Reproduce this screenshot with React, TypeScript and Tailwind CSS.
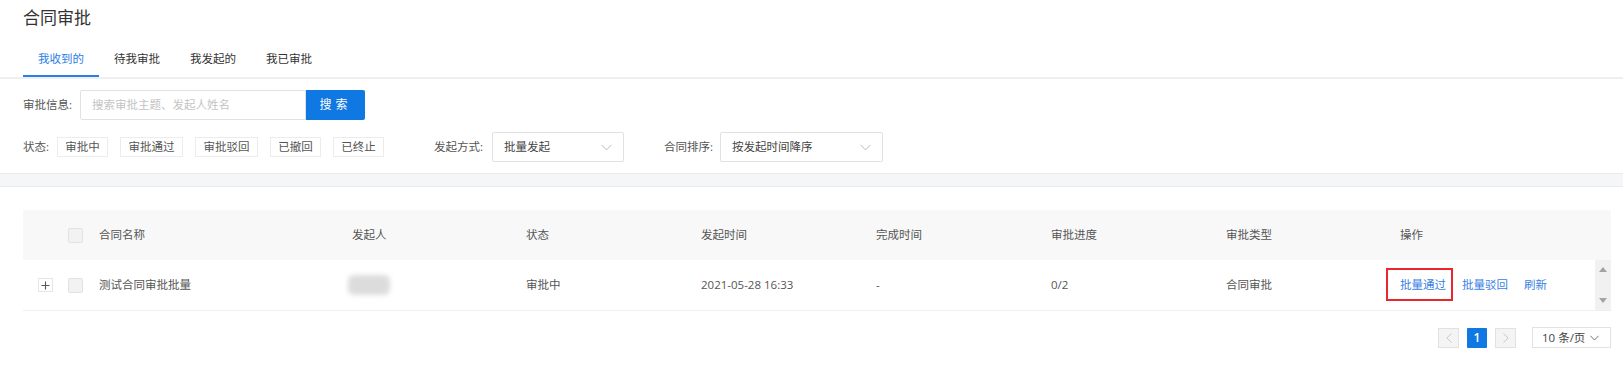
import React from "react";

const tabs = ["我收到的", "待我审批", "我发起的", "我已审批"];
const statusTags = ["审批中", "审批通过", "审批驳回", "已撤回", "已终止"];

const cols = "grid grid-cols-[76px_253px_174px_175px_175px_175px_175px_174px_195px_16px]";

const Chevron = ({ className = "", w = 11, h = 7 }: { className?: string; w?: number; h?: number }) => (
  <svg width={w} height={h} viewBox="0 0 11 7" className={className} fill="none">
    <polyline points="0.5,0.8 5.5,6 10.5,0.8" stroke="currentColor" strokeWidth="1" />
  </svg>
);

const Checkbox = () => (
  <span className="block h-[15px] w-[15px] rounded-[2px] border border-[#e2e2e2] bg-[#f2f2f2]" />
);

const Select = ({ value, width }: { value: string; width: string }) => (
  <div
    className={`flex h-[30px] ${width} items-center justify-between rounded-[2px] border border-[#e1e1e1] bg-white pl-[11px] pr-[11px] text-[#444]`}
  >
    <span>{value}</span>
    <Chevron className="text-[#bdbdbd]" />
  </div>
);

export default function App() {
  return (
    <div className="h-[384px] w-[1623px] overflow-hidden bg-white font-['Open_Sans','Noto_Sans_CJK_SC',sans-serif] text-[11.5px] text-[#555]">
      {/* title */}
      <div className="pl-[23px] pt-[8px] text-[17px] leading-5 text-[#333]">合同审批</div>

      {/* tabs */}
      <div className="flex border-b-2 border-[#efefef] pl-[23px]">
        {tabs.map((t, i) => (
          <div
            key={t}
            className={`h-[49px] px-[15px] pt-[24px] leading-[14px] ${
              i === 0 ? "border-b-2 border-[#2a80e6] text-[#2a80e6]" : "text-[#333]"
            }`}
          >
            {t}
          </div>
        ))}
      </div>

      {/* search */}
      <div className="mt-[11px] flex h-[30px] items-center pl-[23px]">
        <span className="w-[57px]">审批信息:</span>
        <div className="flex h-[30px] w-[226px] items-center rounded-l-[2px] border border-[#e1e1e1] pl-[11px] text-[#c4c4c4]">
          搜索审批主题、发起人姓名
        </div>
        <button
          type="button"
          className="h-[30px] w-[59px] rounded-r-[2px] bg-[#0f78e2] text-[12px] tracking-[4px] text-white"
        >
          搜索
        </button>
      </div>

      {/* filters */}
      <div className="mt-[12px] flex h-[30px] items-center pl-[23px]">
        <span className="w-[34px]">状态:</span>
        <div className="flex gap-[12px]">
          {statusTags.map((s) => (
            <span
              key={s}
              className={`flex h-[20px] items-center justify-center border border-[#ececec] bg-white leading-none ${
                s.length > 3 ? "w-[63px]" : "w-[51px]"
              }`}
            >
              {s}
            </span>
          ))}
        </div>
        <span className="ml-[50px] w-[58px]">发起方式:</span>
        <Select value="批量发起" width="w-[132px]" />
        <span className="ml-[40px] w-[56px]">合同排序:</span>
        <Select value="按发起时间降序" width="w-[163px]" />
      </div>

      {/* divider band */}
      <div className="mt-[11px] h-[14px] border-y border-[#ebebeb] bg-[#f5f6f7]" />

      {/* table */}
      <div className="ml-[23px] mt-[23px] w-[1588px]">
        <div className={`${cols} h-[50px] items-center bg-[#f8f8f8]`}>
          <div className="flex items-center pl-[45px]">
            <Checkbox />
          </div>
          <div>合同名称</div>
          <div>发起人</div>
          <div>状态</div>
          <div>发起时间</div>
          <div>完成时间</div>
          <div>审批进度</div>
          <div>审批类型</div>
          <div>操作</div>
          <div />
        </div>

        <div className={`${cols} h-[51px] items-center border-b border-[#efefef]`}>
          <div className="flex items-center pl-[15px]">
            <span className="flex h-[14px] w-[15px] items-center justify-center border border-[#e6e6e6] bg-white">
              <svg width="9" height="9" viewBox="0 0 9 9">
                <path d="M4.5 0.5v8M0.5 4.5h8" stroke="#555" strokeWidth="1.1" />
              </svg>
            </span>
            <span className="ml-[15px]">
              <Checkbox />
            </span>
          </div>
          <div>测试合同审批批量</div>
          <div className="flex">
            <span className="-ml-[4px] block h-[20px] w-[42px] rounded-[6px] bg-[#dcdcdc] blur-[2.5px]" />
          </div>
          <div>审批中</div>
          <div>2021-05-28 16:33</div>
          <div>-</div>
          <div>0/2</div>
          <div>合同审批</div>
          <div className="flex items-center gap-[16px] text-[#3b7fe4]">
            <span className="relative">
              批量通过
              <span className="absolute -left-[14px] -right-[7px] -top-[8px] -bottom-[7px] border-2 border-[#e8262b]" />
            </span>
            <span>批量驳回</span>
            <span>刷新</span>
          </div>
          <div className="flex h-[50px] flex-col items-center justify-between bg-[#f1f1f1] py-[7px]">
            <svg width="8" height="5" viewBox="0 0 8 5">
              <polygon points="4,0 8,5 0,5" fill="#a3a3a3" />
            </svg>
            <svg width="8" height="5" viewBox="0 0 8 5">
              <polygon points="0,0 8,0 4,5" fill="#a3a3a3" />
            </svg>
          </div>
        </div>

        {/* pagination */}
        <div className="mt-[16px] flex items-center justify-end gap-[8px]">
          <span className="flex h-[20px] w-[21px] items-center justify-center border border-[#e2e2e2] bg-[#f4f4f4] text-[#c8c8c8]">
            <svg width="6" height="10" viewBox="0 0 6 10" fill="none">
              <polyline points="5.5,0.5 0.8,5 5.5,9.5" stroke="currentColor" strokeWidth="1" />
            </svg>
          </span>
          <span className="flex h-[20px] w-[20px] items-center justify-center rounded-[1px] bg-[#0f78e2] text-[12px] font-semibold text-white">
            1
          </span>
          <span className="flex h-[20px] w-[21px] items-center justify-center border border-[#e2e2e2] bg-[#f4f4f4] text-[#c8c8c8]">
            <svg width="6" height="10" viewBox="0 0 6 10" fill="none">
              <polyline points="0.5,0.5 5.2,5 0.5,9.5" stroke="currentColor" strokeWidth="1" />
            </svg>
          </span>
          <span className="ml-[8px] flex h-[21px] w-[79px] items-center border border-[#e2e2e2] bg-white pl-[9px] text-[11.5px] text-[#444]">
            <span>10 条/页</span>
            <Chevron className="ml-[5px] text-[#555]" w={9} h={6} />
          </span>
        </div>
      </div>
    </div>
  );
}
